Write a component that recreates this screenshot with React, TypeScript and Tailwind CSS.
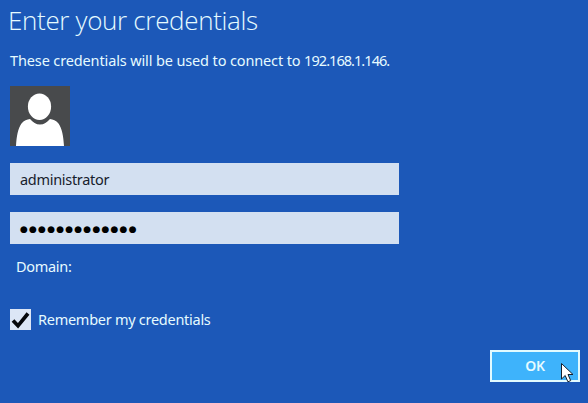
function Avatar() {
  return (
    <svg viewBox="0 0 60 60" className="block h-[60px] w-[60px] bg-[#484a4c]" aria-hidden="true">
      <path d="M6 60C6.500 51 8 42 11.500 37.500C14 34.500 17 33.500 20 33C23 36.500 26 38.500 30 38.500C34 38.500 37 36.500 40 33C43 33.500 46 34.500 48.500 37.500C52 42 53.500 51 54 60Z" fill="#fff" />
      <ellipse cx="29.500" cy="20.700" rx="11.600" ry="13.200" fill="#fff" />
    </svg>
  );
}

export default function App() {
  return (
    <main className="flex h-[403px] w-[588px] flex-col overflow-hidden bg-[#1c58b8] pl-[10px] font-['Noto_Sans','Open_Sans',sans-serif] text-[14.5px] leading-5 tracking-[-0.3px] whitespace-nowrap text-[#e6fbff]">
      <h1 className="-ml-[2px] h-[50px] font-['Open_Sans',sans-serif] text-[26px] leading-[41px] font-light tracking-[-0.33px]">Enter your credentials</h1>
      <p className="h-[36px] tracking-[-0.13px]">These credentials will be used to connect to <span className="tracking-[-0.95px]">192.168.1.146.</span></p>
      <Avatar />
      <div className="mt-[17px] h-8 w-[389px] bg-[#d3e0f1] px-[10px] leading-8 text-[#17202c]">administrator</div>
      <div className="mt-[17px] h-8 w-[389px] bg-[#d3e0f1] px-[10px] font-['DejaVu_Sans',sans-serif] text-[9px] leading-[35px] tracking-[1.2px] text-black">●●●●●●●●●●●●●</div>
      <label className="mt-[12px] ml-[6px] h-5">Domain:</label>
      <label className="mt-[33px] flex h-[21px] items-center gap-[7px]">
        <span className="h-[21px] w-[21px] bg-[#dce6f6]">
          <svg viewBox="0 0 21 21" className="block h-[21px] w-[21px]" fill="none" aria-hidden="true">
            <path d="M3 11.500L8 16.800L18 4.500" stroke="#05070c" strokeWidth="3.700" />
          </svg>
        </span>
        <span className="h-[21px] tracking-[-0.27px]">Remember my credentials</span>
      </label>
      <div className="relative mt-[20px] mr-[8px] self-end">
        <button className="block h-8 w-[90px] border-2 border-[#e2fbff] bg-[#3eb3fb] text-[14px] leading-7 font-semibold">OK</button>
        <svg viewBox="0 0 13 20" className="absolute top-[13px] left-[71px] h-5 w-[13px]" aria-hidden="true">
          <path d="M.500 .500V16L4.200 12.500L6.900 18.800L9.700 17.600L7 11.500H12Z" fill="#fff" stroke="#17202c" strokeWidth="1" />
        </svg>
      </div>
    </main>
  );
}
